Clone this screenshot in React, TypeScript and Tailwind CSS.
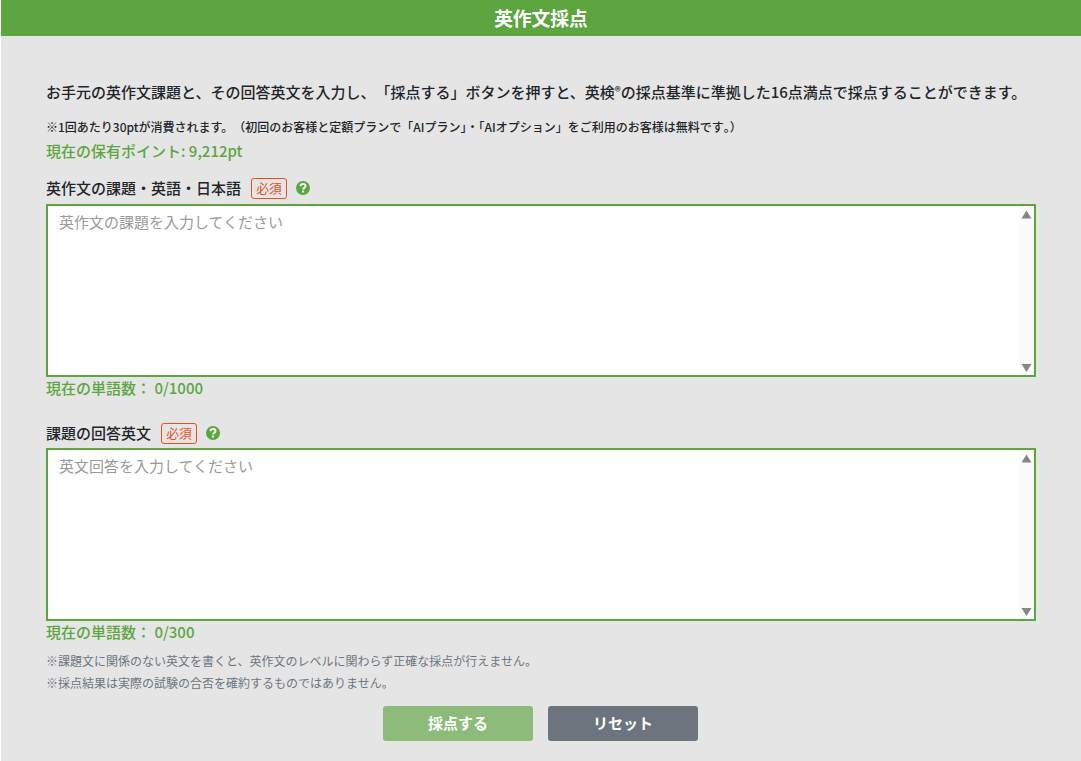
const font = { fontFamily: '"Noto Sans CJK JP", "Noto Sans", sans-serif' };

function Help() {
  return (
    <svg width="14" height="14" viewBox="0 0 14 14" className="shrink-0">
      <circle cx="7" cy="7" r="7" fill="#5ca53f" />
      <path d="M4.6 5.3c0-1.4 1.1-2.3 2.5-2.3s2.4.9 2.4 2.1c0 1.8-2.4 1.7-2.4 3.3" fill="none" stroke="#f2f2f2" strokeWidth="2" />
      <rect x="6" y="9.5" width="2.1" height="2" fill="#f2f2f2" />
    </svg>
  );
}

function Field({ label, placeholder, count, gap }: { label: string; placeholder: string; count: string; gap: string }) {
  return (
    <div>
      <div className="flex items-center h-[24px]">
        <span className="text-[15px] font-medium text-[#212529] leading-[24px]">{label}</span>
        <span className="ml-[10px] h-[21px] w-[36px] flex items-center justify-center border border-[#e8501e] rounded-[3px] text-[12.75px] text-[#e8501e] leading-none">必須</span>
        <span className="ml-[9px] flex"><Help /></span>
      </div>
      <div className={`relative w-[990px] ${gap}`}>
        <textarea
          placeholder={placeholder}
          className="block w-[990px] h-[173px] bg-white border-2 border-[#5ca53f] px-[11px] py-[4px] text-[15px] leading-[24px] resize-none outline-none overflow-hidden placeholder:text-[#9a9a9a]"
        />
        <div className="absolute right-[2px] top-[2px] bottom-[2px] w-[15px] bg-[#fbfbfb]">
          <svg width="15" height="169" viewBox="0 0 15 169" className="block">
            <path d="M2.5 12.5 L7.5 4.5 L12.5 12.5 Z" fill="#868686" />
            <path d="M2.5 158 L12.5 158 L7.5 166 Z" fill="#868686" />
          </svg>
        </div>
      </div>
      <div className="text-[15px] font-medium text-[#5ca53f] leading-[22px]">現在の単語数： {count}</div>
    </div>
  );
}

export default function App() {
  return (
    <div className="w-[1081px] h-[761px] overflow-hidden bg-white pl-px [text-spacing-trim:space-all]" style={font}>
      <div className="h-full bg-[#e5e5e5]">
        <header className="h-[36px] bg-[#5ca53f] text-white text-[18.75px] font-bold text-center leading-[36px]">英作文採点</header>
        <main className="pl-[45px] pt-[44px]">
          <p className="text-[15px] font-medium text-[#212529] leading-[24px]">お手元の英作文課題と、その回答英文を入力し、「採点する」ボタンを押すと、英検<sup className="text-[12px] top-[-2px]">®</sup>の採点基準に準拠した16点満点で採点することができます。</p>
          <p className="mt-[14px] text-[12px] font-medium text-[#212529] leading-[18px]">※1回あたり30ptが消費されます。（初回のお客様と定額プランで<span className="[text-spacing-trim:normal]">「AIプラン」・「AIオプション」</span>をご利用のお客様は無料です<span className="[text-spacing-trim:normal]">。）</span></p>
          <p className="mt-[3px] text-[15px] font-medium text-[#5ca53f] leading-[24px]">現在の保有ポイント: 9,212pt</p>
          <div className="mt-[13px]">
            <Field label="英作文の課題・英語・日本語" placeholder="英作文の課題を入力してください" count="0/1000" gap="mt-[4px]" />
          </div>
          <div className="mt-[22px]">
            <Field label="課題の回答英文" placeholder="英文回答を入力してください" count="0/300" gap="mt-[3px]" />
          </div>
          <p className="mt-[9px] text-[12px] text-[#6c757d] leading-[18px]">※課題文に関係のない英文を書くと、英作文のレベルに関わらず正確な採点が行えません。</p>
          <p className="mt-[4px] text-[12px] text-[#6c757d] leading-[18px]">※採点結果は実際の試験の合否を確約するものではありません。</p>
          <div className="mt-[14px] flex gap-[15px] pl-[337px]">
            <button className="w-[150px] h-[35px] rounded-[3px] bg-[#8dbb79] text-white text-[15px] font-bold">採点する</button>
            <button className="w-[150px] h-[35px] rounded-[3px] bg-[#6c757d] text-white text-[15px] font-bold">リセット</button>
          </div>
        </main>
      </div>
    </div>
  );
}
